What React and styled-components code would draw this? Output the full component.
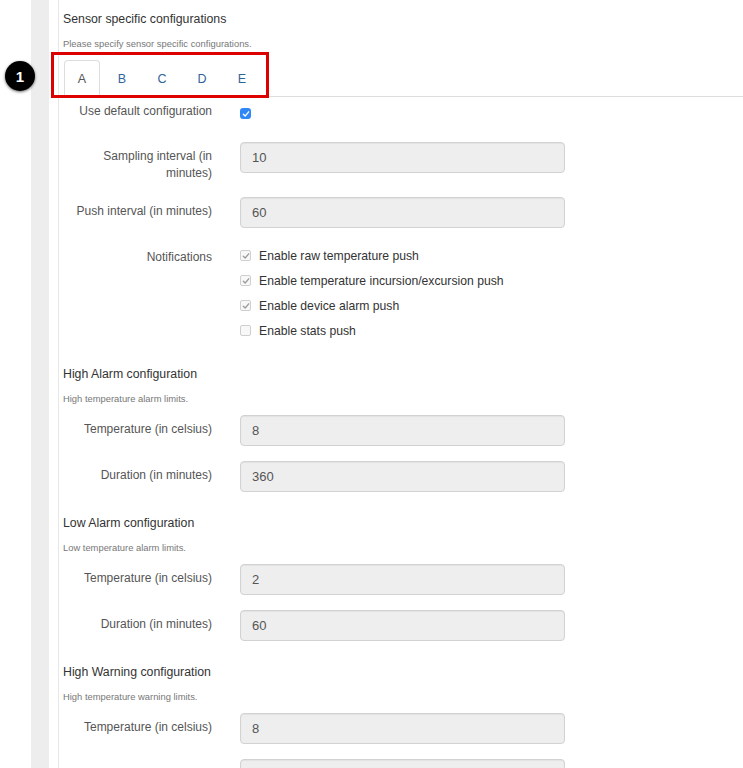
import React from "react";
import styled, { createGlobalStyle } from "styled-components";

const Global = createGlobalStyle`
  html, body { margin: 0; padding: 0; background: #fff; }
  body { font-family: "Liberation Sans", Arial, Helvetica, sans-serif; color: #333; overflow: hidden; }
  * { box-sizing: border-box; }
`;

const Page = styled.div`
  position: relative;
  display: flex;
  min-height: 768px;
  width: 743px;
  overflow: hidden;
`;

const SideStrip = styled.div`
  width: 18px;
  margin-left: 31px;
  background: #ededed;
  flex: none;
`;

const Main = styled.div`
  margin-left: 9px;
  border-left: 1px solid #e7e7e7;
  flex: 1;
  padding: 10px 0 0 4px;
  display: flex;
  flex-direction: column;
`;

const Section = styled.section`
  display: flex;
  flex-direction: column;
`;

const Heading = styled.div`
  font-size: 12.3px;
  line-height: 18px;
  color: #333;
  margin-top: ${(p) => p.$mt || 0}px;
`;

const Help = styled.div`
  font-size: 9.4px;
  line-height: 12px;
  color: #777;
  margin-top: 10px;
  margin-bottom: ${(p) => p.$mb || 0}px;
`;

const TabList = styled.div`
  display: flex;
  gap: 4px;
  margin: 10px 0 0 -4px;
  padding-left: 5px;
  height: 37px;
  border-bottom: 1px solid #ddd;
`;

const Tab = styled.div`
  width: 36px;
  height: 37px;
  display: flex;
  align-items: center;
  justify-content: center;
  font-size: 12.5px;
  color: ${(p) => (p.$active ? "#555" : "#2d6599")};
  background: #fff;
  border: 1px solid ${(p) => (p.$active ? "#ddd" : "transparent")};
  border-bottom-color: ${(p) => (p.$active ? "#fff" : "transparent")};
  border-radius: 4px 4px 0 0;
`;

const Row = styled.div`
  display: grid;
  grid-template-columns: 149px 325px;
  column-gap: 28px;
  margin-bottom: 15px;
  min-height: ${(p) => p.$minH || 31}px;
`;

const Label = styled.div`
  text-align: right;
  font-size: 12px;
  line-height: 17px;
  padding-top: 6px;
  color: #555;
`;

const Input = styled.div`
  height: 31px;
  background: #eee;
  border: 1px solid #d2d2d2;
  border-radius: 4px;
  padding: 0 11px;
  display: flex;
  align-items: center;
  font-size: 13px;
  color: #555;
  box-shadow: inset 0 1px 1px rgba(0, 0, 0, 0.05);
`;

const BlueBox = styled.div`
  width: 11px;
  height: 11px;
  margin-top: 11px;
  border-radius: 3px;
  background: #2f88f5;
  display: flex;
  align-items: center;
  justify-content: center;
`;

const CheckList = styled.div`
  display: flex;
  flex-direction: column;
`;

const CheckItem = styled.div`
  height: 25px;
  display: flex;
  align-items: center;
  font-size: 12.2px;
  color: #333;
`;

const GrayBox = styled.div`
  width: 11px;
  height: 11px;
  margin-right: 8px;
  border: 1px solid #cfcfcf;
  border-radius: 2px;
  background: #f8f8f8;
  display: flex;
  align-items: center;
  justify-content: center;
  flex: none;
`;

const Badge = styled.div`
  position: absolute;
  left: 5px;
  top: 61px;
  width: 30px;
  height: 30px;
  border-radius: 50%;
  background: #000;
  color: #fff;
  font-weight: bold;
  font-size: 15px;
  display: flex;
  align-items: center;
  justify-content: center;
  box-shadow: 0 1px 3px rgba(0, 0, 0, 0.6);
`;

const Highlight = styled.div`
  position: absolute;
  left: 51px;
  top: 52px;
  width: 218px;
  height: 46px;
  border: 3px solid #dd0000;
  pointer-events: none;
`;

const Check = ({ color }) => (
  <svg width="8" height="8" viewBox="0 0 8 8">
    <path d="M1.3 4.2 L3.2 6 L6.7 1.8" fill="none" stroke={color} strokeWidth="1.3" strokeLinecap="round" strokeLinejoin="round" />
  </svg>
);

const notifications = [
  ["Enable raw temperature push", true],
  ["Enable temperature incursion/excursion push", true],
  ["Enable device alarm push", true],
  ["Enable stats push", false],
];

const sections = [
  { title: "High Alarm configuration", help: "High temperature alarm limits.", temp: "8", dur: "360" },
  { title: "Low Alarm configuration", help: "Low temperature alarm limits.", temp: "2", dur: "60" },
  { title: "High Warning configuration", help: "High temperature warning limits.", temp: "8", dur: "" },
];

export default function App() {
  return (
    <>
      <Global />
      <Page>
        <SideStrip />
        <Main>
          <Heading>Sensor specific configurations</Heading>
          <Help>Please specify sensor specific configurations.</Help>
          <TabList>
            {["A", "B", "C", "D", "E"].map((t, i) => (
              <Tab key={t} $active={i === 0}>{t}</Tab>
            ))}
          </TabList>
          <Row $minH={30}>
            <Label>Use default configuration</Label>
            <div>
              <BlueBox>
                <Check color="#fff" />
              </BlueBox>
            </div>
          </Row>
          <Row>
            <Label>Sampling interval (in minutes)</Label>
            <div><Input>10</Input></div>
          </Row>
          <Row>
            <Label>Push interval (in minutes)</Label>
            <div><Input>60</Input></div>
          </Row>
          <Row>
            <Label>Notifications</Label>
            <CheckList>
              {notifications.map(([t, on]) => (
                <CheckItem key={t}>
                  <GrayBox>{on && <Check color="#9a9a9a" />}</GrayBox>
                  {t}
                </CheckItem>
              ))}
            </CheckList>
          </Row>
          {sections.map((s) => (
            <Section key={s.title}>
              <Heading $mt={7}>{s.title}</Heading>
              <Help $mb={10}>{s.help}</Help>
              <Row>
                <Label>Temperature (in celsius)</Label>
                <div><Input>{s.temp}</Input></div>
              </Row>
              <Row>
                <Label>Duration (in minutes)</Label>
                <div><Input>{s.dur}</Input></div>
              </Row>
            </Section>
          ))}
        </Main>
        <Badge>1</Badge>
        <Highlight />
      </Page>
    </>
  );
}
